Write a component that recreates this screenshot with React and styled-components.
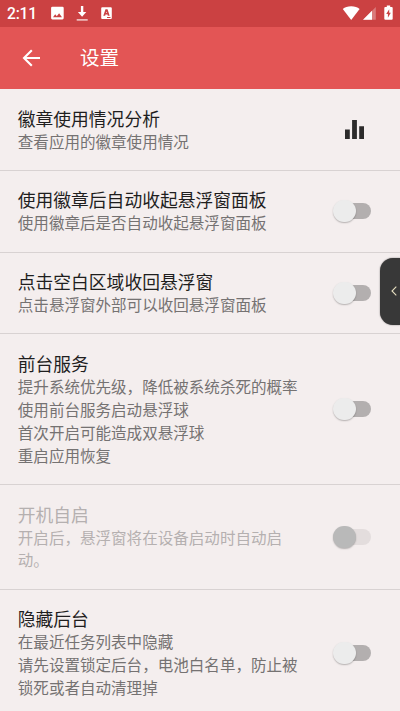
import React from 'react';
import styled, { createGlobalStyle } from 'styled-components';

const GlobalStyle = createGlobalStyle`
  * {
    box-sizing: border-box;
  }

  body {
    margin: 0;
    overflow: hidden;
    background: #f4eeee;
    font-family: Roboto, 'Noto Sans CJK SC', sans-serif;
  }
`;

const Screen = styled.div`
  position: relative;
  height: 100vh;
  overflow: hidden;
  background: #f4eeee;
`;

const StatusBar = styled.div`
  display: flex;
  align-items: center;
  justify-content: space-between;
  height: 26.5px;
  padding: 0 6px 0 7px;
  background: #cb4142;
  color: #fff;
`;

const StatusGroup = styled.div`
  display: flex;
  align-items: center;

  svg {
    display: block;
  }
`;

const Clock = styled.span`
  width: 43px;
  padding-top: 2px;
  font-size: 15.6px;
  font-weight: 500;
  line-height: 20px;
  letter-spacing: -0.2px;
`;

const AppBar = styled.header`
  display: flex;
  align-items: center;
  height: 62.5px;
  padding-left: 22px;
  background: #e35555;
  color: #fff;
`;

const BackIcon = styled.svg`
  display: block;
  width: 18px;
  height: 18px;
  margin-right: 40px;
`;

const AppTitle = styled.h1`
  margin: 0;
  padding-top: 2px;
  font-size: 19.6px;
  font-weight: 400;
  line-height: 28px;
`;

const Row = styled.div`
  display: flex;
  align-items: center;
  justify-content: space-between;
  padding: 0 29.5px 0 17.8px;
  border-bottom: 1px solid #d8d2d2;
`;

const RowText = styled.div`
  width: 284px;
  padding: 19.7px 0 15.3px;
  color: ${(props) => (props.$disabled ? '#b5b0b0' : '#757272')};
`;

const RowTitle = styled.div`
  color: ${(props) => (props.$disabled ? '#b5b0b0' : '#1f1e1e')};
  font-size: 17.78px;
  line-height: 22.9px;
`;

const RowSummary = styled.div`
  font-size: 15.56px;
  line-height: 22.9px;
  white-space: pre-line;
`;

const Track = styled.div`
  display: flex;
  align-items: center;
  width: 35px;
  height: 16px;
  border-radius: 8px;
  background: ${(props) => (props.$disabled ? '#e3dddd' : '#b3afaf')};
`;

const Thumb = styled.div`
  flex: none;
  width: 22.5px;
  height: 22.5px;
  margin-left: -2.5px;
  border-radius: 50%;
  background: ${(props) => (props.$disabled ? '#b9b9b9' : '#ececec')};
  box-shadow: 0 1px 1.5px rgba(0, 0, 0, 0.26);
`;

const ChartIcon = styled.svg`
  display: block;
  width: 19px;
  height: 19px;
  margin-right: 6.5px;
`;

const SideHandle = styled.div`
  position: absolute;
  top: 258px;
  right: 0;
  display: flex;
  align-items: center;
  justify-content: flex-end;
  width: 20px;
  height: 66.5px;
  padding-right: 3.5px;
  border-radius: 13px 0 0 13px;
  background: #383838;
  box-shadow: 0 0 1.5px rgba(0, 0, 0, 0.6);
`;

const settings = [
  {
    title: '徽章使用情况分析',
    summary: '查看应用的徽章使用情况',
    chart: true,
  },
  {
    title: '使用徽章后自动收起悬浮窗面板',
    summary: '使用徽章后是否自动收起悬浮窗面板',
  },
  {
    title: '点击空白区域收回悬浮窗',
    summary: '点击悬浮窗外部可以收回悬浮窗面板',
  },
  {
    title: '前台服务',
    summary:
      '提升系统优先级，降低被系统杀死的概率\n使用前台服务启动悬浮球\n首次开启可能造成双悬浮球\n重启应用恢复',
  },
  {
    title: '开机自启',
    summary: '开启后，悬浮窗将在设备启动时自动启动。',
    disabled: true,
  },
  {
    title: '隐藏后台',
    summary:
      '在最近任务列表中隐藏\n请先设置锁定后台，电池白名单，防止被锁死或者自动清理掉',
  },
];

function NotificationIcons() {
  return (
    <svg width="62" height="18" viewBox="0 0 62 18" fill="#fff">
      <path
        fillRule="evenodd"
        d="M2.4 2.8h10a1.3 1.3 0 0 1 1.3 1.3v10a1.3 1.3 0 0 1-1.3 1.3h-10a1.3 1.3 0 0 1-1.3-1.3v-10a1.3 1.3 0 0 1 1.3-1.3zM3 13.2h9L9.1 9.3l-2.3 2.9-1.6-1.9z"
      />
      <path d="M30.900 2h2.400v6h3l-4.200 4.700L27.900 8h3z" />
      <path d="M26.700 15.200h11v1.400h-11z" fillOpacity="0.8" />
      <path
        fillRule="evenodd"
        d="M52.200 3.300h8.600a1 1 0 0 1 1 1v9.600a1 1 0 0 1-1 1h-8.600a1 1 0 0 1-1-1V4.300a1 1 0 0 1 1-1zM55.500 5.300l-2.200 6.500h1.900l.3-1.200h2l.3 1.200h1.900l-2.200-6.500zM56.500 7.400l.5 1.700h-1zM57 13.100v.8h3.500v-.8z"
      />
    </svg>
  );
}

function SystemIcons() {
  return (
    <svg width="52" height="18" viewBox="0 0 52 18" fill="#fff">
      <path d="M.8 4.900Q3.900 2.200 9.200 2.200t8.400 2.700L9.200 15.900z" />
      <path d="M33.800 3v12.700H21z" fillOpacity="0.3" />
      <path d="M30 6.800v8.900h-9z" />
      <path
        fillRule="evenodd"
        d="M44.800 1.600h3.400v1.500h1.500a1 1 0 0 1 1 1v10.700a1 1 0 0 1-1 1h-6.400a1 1 0 0 1-1-1V4.100a1 1 0 0 1 1-1h1.500zM47.200 5.200l-3 4.900h1.700v3.600l2.900-4.900h-1.600z"
      />
    </svg>
  );
}

function Switch({ disabled }) {
  return (
    <Track $disabled={disabled}>
      <Thumb $disabled={disabled} />
    </Track>
  );
}

function SettingRow({ title, summary, chart, disabled }) {
  return (
    <Row>
      <RowText $disabled={disabled}>
        <RowTitle $disabled={disabled}>{title}</RowTitle>
        <RowSummary>{summary}</RowSummary>
      </RowText>
      {chart ? (
        <ChartIcon viewBox="0 0 19 19" fill="#2c2b2b">
          <path d="M0 9.500h4.800v9.500H0zM7.100 0h4.800v19H7.100zM14.200 6.200H19V19h-4.800z" />
        </ChartIcon>
      ) : (
        <Switch disabled={disabled} />
      )}
    </Row>
  );
}

function App() {
  return (
    <>
      <GlobalStyle />
      <Screen>
        <StatusBar>
          <StatusGroup>
            <Clock>2:11</Clock>
            <NotificationIcons />
          </StatusGroup>
          <SystemIcons />
        </StatusBar>
        <AppBar>
          <BackIcon
            viewBox="0 0 18 18"
            fill="none"
            stroke="#fff"
            strokeWidth="2.1"
          >
            <path d="M18 9H2M9.800 1.200L2 9l7.800 7.800" />
          </BackIcon>
          <AppTitle>设置</AppTitle>
        </AppBar>
        {settings.map((item) => (
          <SettingRow key={item.title} {...item} />
        ))}
        <SideHandle>
          <svg
            width="6"
            height="10"
            viewBox="0 0 6 10"
            fill="none"
            stroke="#e6dfc0"
            strokeWidth="1.1"
          >
            <path d="M5.300.7L1 5l4.300 4.300" />
          </svg>
        </SideHandle>
      </Screen>
    </>
  );
}

export default App;
